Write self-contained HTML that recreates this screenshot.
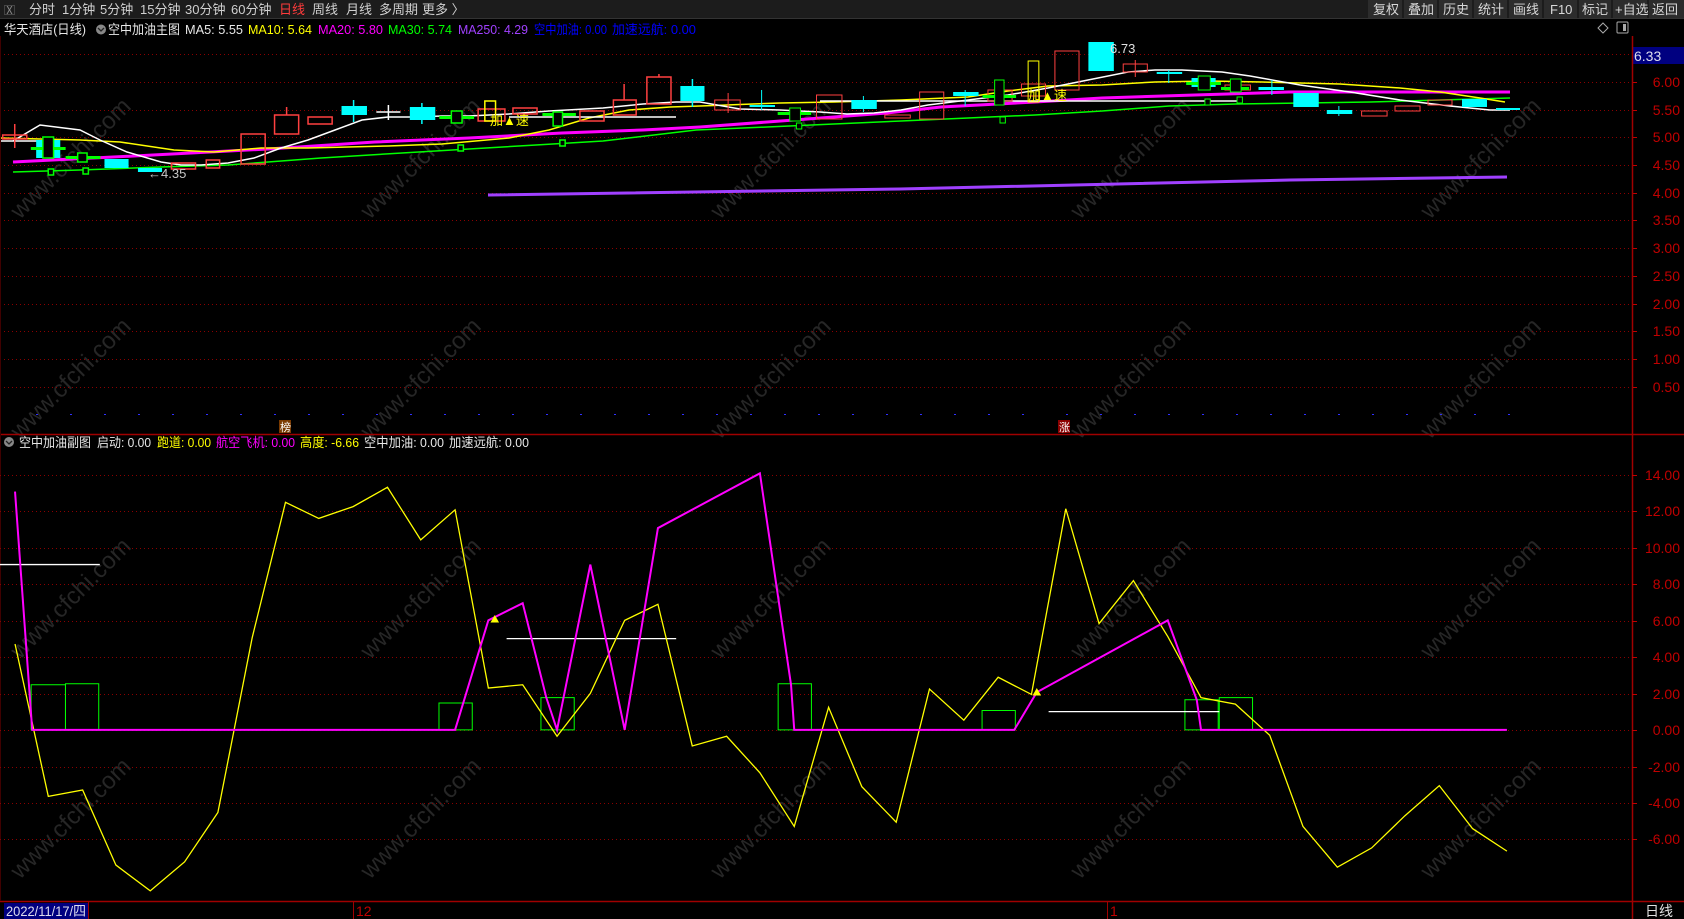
<!DOCTYPE html>
<html><head><meta charset="utf-8">
<style>
html,body{margin:0;padding:0;background:#000;}
body{width:1684px;height:919px;overflow:hidden;position:relative;font-family:"Liberation Sans","Noto Sans CJK SC",sans-serif;}
svg{position:absolute;left:0;top:0;}
</style></head><body>
<svg width="1684" height="919" viewBox="0 0 1684 919" xmlns="http://www.w3.org/2000/svg" font-family="Liberation Sans, Noto Sans CJK SC, sans-serif">
<rect width="1684" height="919" fill="#000"/>
<!-- watermarks -->
<g fill="#262626" font-size="24" font-family="Liberation Sans, sans-serif">
<text transform="translate(20,220) rotate(-45)">www.cfchi.com</text>
<text transform="translate(370,220) rotate(-45)">www.cfchi.com</text>
<text transform="translate(720,220) rotate(-45)">www.cfchi.com</text>
<text transform="translate(1080,220) rotate(-45)">www.cfchi.com</text>
<text transform="translate(1430,220) rotate(-45)">www.cfchi.com</text>
<text transform="translate(20,440) rotate(-45)">www.cfchi.com</text>
<text transform="translate(370,440) rotate(-45)">www.cfchi.com</text>
<text transform="translate(720,440) rotate(-45)">www.cfchi.com</text>
<text transform="translate(1080,440) rotate(-45)">www.cfchi.com</text>
<text transform="translate(1430,440) rotate(-45)">www.cfchi.com</text>
<text transform="translate(20,660) rotate(-45)">www.cfchi.com</text>
<text transform="translate(370,660) rotate(-45)">www.cfchi.com</text>
<text transform="translate(720,660) rotate(-45)">www.cfchi.com</text>
<text transform="translate(1080,660) rotate(-45)">www.cfchi.com</text>
<text transform="translate(1430,660) rotate(-45)">www.cfchi.com</text>
<text transform="translate(20,880) rotate(-45)">www.cfchi.com</text>
<text transform="translate(370,880) rotate(-45)">www.cfchi.com</text>
<text transform="translate(720,880) rotate(-45)">www.cfchi.com</text>
<text transform="translate(1080,880) rotate(-45)">www.cfchi.com</text>
<text transform="translate(1430,880) rotate(-45)">www.cfchi.com</text>
</g>

<!-- toolbar -->
<rect x="0" y="0" width="1684" height="18" fill="#1c1c1c"/>
<line x1="0" y1="18.5" x2="1684" y2="18.5" stroke="#333"/>
<g font-size="13" fill="#d0d0d0">
<text x="4" y="14" fill="#888" font-size="11">Ⅹ⃞</text>
<text x="29" y="14">分时</text><text x="62" y="14">1分钟</text><text x="100" y="14">5分钟</text>
<text x="140" y="14">15分钟</text><text x="185" y="14">30分钟</text><text x="231" y="14">60分钟</text>
<text x="279" y="14" fill="#ff3b3b">日线</text><text x="312" y="14">周线</text><text x="346" y="14">月线</text>
<text x="379" y="14">多周期</text><text x="422" y="14">更多 〉</text>
</g>
<g fill="#2c2c2c">
<rect x="1368" y="0" width="34" height="18"/><rect x="1404" y="0" width="33" height="18"/><rect x="1439" y="0" width="33" height="18"/>
<rect x="1474" y="0" width="33" height="18"/><rect x="1509" y="0" width="33" height="18"/><rect x="1544" y="0" width="33" height="18"/>
<rect x="1579" y="0" width="32" height="18"/><rect x="1613" y="0" width="34" height="18"/><rect x="1649" y="0" width="35" height="18"/>
</g>
<g font-size="13" fill="#d8d8d8">
<text x="1373" y="14">复权</text><text x="1408" y="14">叠加</text><text x="1443" y="14">历史</text><text x="1478" y="14">统计</text>
<text x="1513" y="14">画线</text><text x="1550" y="14">F10</text><text x="1582" y="14">标记</text><text x="1615" y="14">+自选</text><text x="1652" y="14">返回</text>
</g>

<!-- title row -->
<g font-size="13" lengthAdjust="spacingAndGlyphs">
<text x="4" y="34" fill="#e8e8e8" textLength="82" lengthAdjust="spacingAndGlyphs">华天酒店(日线)</text>
<circle cx="101" cy="29.5" r="5" fill="#888"/><path d="M98,28 L101,31 L104,28" stroke="#222" fill="none" stroke-width="1.3"/>
<text x="108" y="34" fill="#e8e8e8" textLength="72" lengthAdjust="spacingAndGlyphs">空中加油主图</text>
<text x="185" y="34" fill="#e8e8e8" textLength="58" lengthAdjust="spacingAndGlyphs">MA5: 5.55</text>
<text x="248" y="34" fill="#ffff00" textLength="64" lengthAdjust="spacingAndGlyphs">MA10: 5.64</text>
<text x="318" y="34" fill="#ff00ff" textLength="65" lengthAdjust="spacingAndGlyphs">MA20: 5.80</text>
<text x="388" y="34" fill="#00ff00" textLength="64" lengthAdjust="spacingAndGlyphs">MA30: 5.74</text>
<text x="458" y="34" fill="#a040ff" textLength="70" lengthAdjust="spacingAndGlyphs">MA250: 4.29</text>
<text x="534" y="34" fill="#0000ff" textLength="73" lengthAdjust="spacingAndGlyphs">空中加油: 0.00</text>
<text x="612" y="34" fill="#0000ff" textLength="84" lengthAdjust="spacingAndGlyphs">加速远航: 0.00</text>
</g>
<path d="M1603,23 L1608,28 L1603,33 L1598,28 Z" fill="none" stroke="#aaa"/>
<rect x="1617" y="22" width="11" height="11" fill="none" stroke="#aaa" rx="1"/><rect x="1623" y="24" width="3" height="7" fill="#aaa"/>

<!-- main grid -->
<g stroke="#8b0000" stroke-dasharray="1,3">
<line x1="0" y1="54.5" x2="1630" y2="54.5"/><line x1="0" y1="82.5" x2="1630" y2="82.5"/><line x1="0" y1="110.5" x2="1630" y2="110.5"/>
<line x1="0" y1="137.5" x2="1630" y2="137.5"/><line x1="0" y1="165.5" x2="1630" y2="165.5"/><line x1="0" y1="193.5" x2="1630" y2="193.5"/>
<line x1="0" y1="220.5" x2="1630" y2="220.5"/><line x1="0" y1="248.5" x2="1630" y2="248.5"/><line x1="0" y1="276.5" x2="1630" y2="276.5"/>
<line x1="0" y1="304.5" x2="1630" y2="304.5"/><line x1="0" y1="331.5" x2="1630" y2="331.5"/><line x1="0" y1="359.5" x2="1630" y2="359.5"/>
<line x1="0" y1="387.5" x2="1630" y2="387.5"/>
</g>
<!-- main axis labels -->
<g font-size="14" fill="#c00000" text-anchor="end">
<text x="1680" y="87">6.00</text><text x="1680" y="115">5.50</text><text x="1680" y="142">5.00</text><text x="1680" y="170">4.50</text>
<text x="1680" y="198">4.00</text><text x="1680" y="225">3.50</text><text x="1680" y="253">3.00</text><text x="1680" y="281">2.50</text>
<text x="1680" y="309">2.00</text><text x="1680" y="336">1.50</text><text x="1680" y="364">1.00</text><text x="1680" y="392">0.50</text>
</g>
<g stroke="#c00000"><line x1="1632" y1="82.5" x2="1637" y2="82.5"/><line x1="1632" y1="110.5" x2="1637" y2="110.5"/><line x1="1632" y1="137.5" x2="1637" y2="137.5"/><line x1="1632" y1="165.5" x2="1637" y2="165.5"/><line x1="1632" y1="193.5" x2="1637" y2="193.5"/><line x1="1632" y1="220.5" x2="1637" y2="220.5"/><line x1="1632" y1="248.5" x2="1637" y2="248.5"/><line x1="1632" y1="276.5" x2="1637" y2="276.5"/><line x1="1632" y1="304.5" x2="1637" y2="304.5"/><line x1="1632" y1="331.5" x2="1637" y2="331.5"/><line x1="1632" y1="359.5" x2="1637" y2="359.5"/><line x1="1632" y1="387.5" x2="1637" y2="387.5"/></g>
<rect x="1632" y="47" width="52" height="17" fill="#000080"/>
<text x="1634" y="61" font-size="14" fill="#dde">6.33</text>

<!-- MA lines -->
<polyline fill="none" stroke="#a040ff" stroke-width="3" points="488,195 900,189 1290,180 1507,177"/>
<polyline fill="none" stroke="#00ff00" stroke-width="1.5" points="13,172 80,170 161,167 228,165 268,162 321,158 402,153 469,149 536,145 603,141 696,130 767,127 834,124 901,121 968,118 1035,115 1102,111 1169,106 1236,104 1303,103 1370,102 1510,98"/>
<polyline fill="none" stroke="#ff00ff" stroke-width="3" points="13,162 134,156 268,149 375,142 469,138 562,133 643,130 700,127 794,120 887,113 941,107 1035,102 1102,98 1195,95 1289,92 1510,92"/>
<polyline fill="none" stroke="#ffff00" stroke-width="1.5" points="0,138 80,140 120,142 174,150 214,152 261,148 308,148 348,147 388,146 442,144 509,138 549,130 589,118 629,110 670,107 700,106 780,103 834,102 901,100 968,97 1008,91 1048,86 1102,85 1155,82 1209,81 1262,82 1340,84 1400,88 1440,92 1480,98 1505,102"/>
<polyline fill="none" stroke="#ffffff" stroke-width="1.5" points="13,141 40,125 80,130 100,140 127,152 161,162 181,165 201,165 228,163 254,158 281,148 308,140 335,130 362,120 388,117 415,117 442,116 469,116 509,114 549,111 603,108 643,104 676,102 700,102 740,109 780,110 820,112 847,114 874,113 901,110 928,105 968,100 1008,95 1048,88 1088,80 1128,72 1155,70 1182,70 1222,72 1250,76 1300,85 1350,92 1400,100 1450,106 1490,110 1510,110"/>
<line x1="509" y1="117" x2="676" y2="117" stroke="#fff" stroke-width="1.5"/>
<line x1="820" y1="101" x2="1240" y2="101" stroke="#fff" stroke-width="1.5"/>
<line x1="0" y1="141" x2="40" y2="141" stroke="#fff" stroke-width="1.5"/>

<!-- candles zoom6 frame -->
<g transform="scale(1.3393,1)" stroke-width="1.5">
<g fill="none" stroke="#ff4040">
<line x1="11" y1="124" x2="11" y2="148" vector-effect="non-scaling-stroke"/>
<rect x="2" y="135" width="18" height="4" vector-effect="non-scaling-stroke"/>
<rect x="128" y="163" width="18" height="6" vector-effect="non-scaling-stroke"/>
<rect x="154" y="160" width="10" height="8" vector-effect="non-scaling-stroke"/>
<rect x="180" y="134" width="18" height="30" vector-effect="non-scaling-stroke"/>
<line x1="214" y1="107" x2="214" y2="115" vector-effect="non-scaling-stroke"/>
<rect x="205" y="115" width="18" height="19" vector-effect="non-scaling-stroke"/>
<rect x="230" y="117" width="18" height="7" vector-effect="non-scaling-stroke"/>
<rect x="357" y="109" width="20" height="12" vector-effect="non-scaling-stroke"/>
<rect x="383" y="108" width="18" height="6" vector-effect="non-scaling-stroke"/>
<rect x="433" y="111" width="18" height="10" vector-effect="non-scaling-stroke"/>
<line x1="466" y1="84" x2="466" y2="100" vector-effect="non-scaling-stroke"/>
<rect x="458" y="100" width="17" height="15" vector-effect="non-scaling-stroke"/>
<line x1="492" y1="74" x2="492" y2="77" vector-effect="non-scaling-stroke"/>
<rect x="483" y="77" width="18" height="27" vector-effect="non-scaling-stroke"/>
</g>
<g fill="#00ffff">
<rect x="27" y="140" width="18" height="18"/>
<rect x="78" y="159" width="18" height="9"/>
<rect x="103" y="168" width="18" height="4"/>
<rect x="255" y="106" width="19" height="9"/>
<rect x="306" y="107" width="19" height="13"/>
<rect x="508" y="86" width="18" height="15"/>
</g>
<g stroke="#00ffff"><line x1="264" y1="100" x2="264" y2="122" vector-effect="non-scaling-stroke"/><line x1="315" y1="103" x2="315" y2="124" vector-effect="non-scaling-stroke"/><line x1="517" y1="79" x2="517" y2="107" vector-effect="non-scaling-stroke"/></g>
<g stroke="#fff"><line x1="281" y1="112" x2="299" y2="112" vector-effect="non-scaling-stroke"/><line x1="290" y1="105" x2="290" y2="120" vector-effect="non-scaling-stroke"/></g>
<g fill="#00ff00">
<rect x="23" y="147" width="26" height="3"/><rect x="49" y="156" width="26" height="3"/><rect x="328" y="116" width="26" height="3"/><rect x="405" y="113" width="25" height="3"/>
</g>
<g fill="#000" stroke="#00ff00">
<rect x="32" y="137" width="8" height="21" vector-effect="non-scaling-stroke"/>
<rect x="58" y="153" width="7" height="9" vector-effect="non-scaling-stroke"/>
<rect x="337" y="111" width="8" height="12" vector-effect="non-scaling-stroke"/>
<rect x="413" y="112" width="7" height="14" vector-effect="non-scaling-stroke"/>
<rect x="36" y="169" width="4" height="6" vector-effect="non-scaling-stroke"/>
<rect x="62" y="168" width="4" height="6" vector-effect="non-scaling-stroke"/>
<rect x="342" y="145" width="4" height="6" vector-effect="non-scaling-stroke"/>
<rect x="418" y="140" width="4" height="6" vector-effect="non-scaling-stroke"/>
</g>
<rect x="362" y="101" width="8" height="20" fill="none" stroke="#ffff00" vector-effect="non-scaling-stroke"/>
</g>
<text x="148" y="178" font-size="13" fill="#c8c8c8">←4.35</text>
<text x="490" y="125" font-size="13" fill="#ffff00">加▲速</text>

<!-- candles zoom7 frame -->
<g transform="translate(700,0) scale(1.3393,1) translate(-700,0)">
<g fill="none" stroke="#ff4040">
<rect x="711" y="100" width="19" height="10" vector-effect="non-scaling-stroke"/>
<rect x="787" y="95" width="19" height="24" vector-effect="non-scaling-stroke"/>
<rect x="838" y="115" width="19" height="3" vector-effect="non-scaling-stroke"/>
<rect x="864" y="92" width="18" height="27" vector-effect="non-scaling-stroke"/>
<rect x="915" y="90" width="18" height="11" vector-effect="non-scaling-stroke"/>
<rect x="940" y="84" width="18" height="12" vector-effect="non-scaling-stroke"/>
<rect x="965" y="51" width="18" height="39" vector-effect="non-scaling-stroke"/>
<rect x="1016" y="64" width="18" height="8" vector-effect="non-scaling-stroke"/>
<rect x="1092" y="85" width="19" height="5" vector-effect="non-scaling-stroke"/>
<rect x="1194" y="111" width="19" height="5" vector-effect="non-scaling-stroke"/>
<line x1="721" y1="93" x2="721" y2="113" vector-effect="non-scaling-stroke"/>
<line x1="1025" y1="60" x2="1025" y2="77" vector-effect="non-scaling-stroke"/>
</g>
<g fill="#00ffff">
<rect x="737" y="105" width="19" height="2"/>
<rect x="813" y="100" width="19" height="9"/>
<rect x="889" y="92" width="19" height="4"/>
<rect x="990" y="42" width="19" height="29"/>
<rect x="1041" y="72" width="19" height="2"/>
<rect x="1067" y="78" width="18" height="9"/>
<rect x="1117" y="87" width="19" height="3"/>
<rect x="1143" y="93" width="19" height="14"/>
<rect x="1168" y="110" width="19" height="4"/>
</g>
<g stroke="#00ffff"><line x1="746" y1="90" x2="746" y2="110" vector-effect="non-scaling-stroke"/><line x1="822" y1="96" x2="822" y2="112" vector-effect="non-scaling-stroke"/><line x1="898" y1="90" x2="898" y2="106" vector-effect="non-scaling-stroke"/><line x1="1050" y1="70" x2="1050" y2="83" vector-effect="non-scaling-stroke"/><line x1="1127" y1="80" x2="1127" y2="95" vector-effect="non-scaling-stroke"/><line x1="1177" y1="106" x2="1177" y2="116" vector-effect="non-scaling-stroke"/></g>
<g fill="#00ff00"><rect x="758" y="112" width="25" height="3"/><rect x="911" y="95" width="25" height="3"/><rect x="1063" y="82" width="26" height="3"/><rect x="1089" y="87" width="21" height="3"/></g>
<g fill="#000" stroke="#00ff00">
<rect x="767" y="108" width="8" height="13" vector-effect="non-scaling-stroke"/>
<rect x="920" y="80" width="7" height="25" vector-effect="non-scaling-stroke"/>
<rect x="1072" y="76" width="9" height="14" vector-effect="non-scaling-stroke"/>
<rect x="1096" y="79" width="8" height="13" vector-effect="non-scaling-stroke"/>
<rect x="772" y="123" width="4" height="6" vector-effect="non-scaling-stroke"/>
<rect x="924" y="117" width="4" height="6" vector-effect="non-scaling-stroke"/>
<rect x="1077" y="99" width="4" height="6" vector-effect="non-scaling-stroke"/>
<rect x="1101" y="97" width="4" height="6" vector-effect="non-scaling-stroke"/>
</g>
<rect x="945" y="61" width="8" height="41" fill="none" stroke="#ffff00" vector-effect="non-scaling-stroke"/>
</g>
<text x="1028" y="100" font-size="13" fill="#ffff00">加▲速</text>
<text x="1110" y="53" font-size="13" fill="#e0e0e0">6.73</text>
<!-- right candles true coords -->
<g fill="none" stroke="#ff4040"><rect x="1395" y="106" width="25" height="5"/><rect x="1428" y="100" width="24" height="5"/></g>
<rect x="1462" y="99" width="25" height="8" fill="#00ffff"/><rect x="1496" y="108" width="24" height="2" fill="#00ffff"/>

<!-- bottom markers -->
<g fill="#3030ff">
<rect x="36" y="414" width="2" height="1"/><rect x="70" y="414" width="2" height="1"/><rect x="104" y="414" width="2" height="1"/><rect x="138" y="414" width="2" height="1"/><rect x="172" y="414" width="2" height="1"/><rect x="206" y="414" width="2" height="1"/><rect x="240" y="414" width="2" height="1"/><rect x="274" y="414" width="2" height="1"/><rect x="308" y="414" width="2" height="1"/><rect x="342" y="414" width="2" height="1"/><rect x="376" y="414" width="2" height="1"/><rect x="410" y="414" width="2" height="1"/><rect x="444" y="414" width="2" height="1"/><rect x="478" y="414" width="2" height="1"/><rect x="512" y="414" width="2" height="1"/><rect x="546" y="414" width="2" height="1"/><rect x="580" y="414" width="2" height="1"/><rect x="614" y="414" width="2" height="1"/><rect x="648" y="414" width="2" height="1"/><rect x="682" y="414" width="2" height="1"/><rect x="716" y="414" width="2" height="1"/><rect x="750" y="414" width="2" height="1"/><rect x="784" y="414" width="2" height="1"/><rect x="818" y="414" width="2" height="1"/><rect x="852" y="414" width="2" height="1"/><rect x="886" y="414" width="2" height="1"/><rect x="920" y="414" width="2" height="1"/><rect x="954" y="414" width="2" height="1"/><rect x="988" y="414" width="2" height="1"/><rect x="1022" y="414" width="2" height="1"/><rect x="1066" y="414" width="2" height="1"/><rect x="1100" y="414" width="2" height="1"/><rect x="1134" y="414" width="2" height="1"/><rect x="1168" y="414" width="2" height="1"/><rect x="1202" y="414" width="2" height="1"/><rect x="1236" y="414" width="2" height="1"/><rect x="1270" y="414" width="2" height="1"/><rect x="1304" y="414" width="2" height="1"/><rect x="1338" y="414" width="2" height="1"/><rect x="1372" y="414" width="2" height="1"/><rect x="1406" y="414" width="2" height="1"/><rect x="1440" y="414" width="2" height="1"/><rect x="1474" y="414" width="2" height="1"/><rect x="1508" y="414" width="2" height="1"/>
</g>
<rect x="279" y="420" width="12" height="13" fill="#7a3a00"/><text x="280" y="431" font-size="11" fill="#fff">榜</text>
<rect x="1058" y="420" width="12" height="13" fill="#8b0000"/><text x="1059" y="431" font-size="11" fill="#fff">涨</text>

<!-- panel separators -->
<line x1="0" y1="434.5" x2="1684" y2="434.5" stroke="#a00000" stroke-width="1.5"/>
<line x1="1632.5" y1="36" x2="1632.5" y2="919" stroke="#a00000" stroke-width="1.5"/>
<line x1="0" y1="901.5" x2="1684" y2="901.5" stroke="#a00000" stroke-width="1.5"/>
<line x1="0.5" y1="36" x2="0.5" y2="901" stroke="#400000"/>

<!-- sub title -->
<g font-size="13">
<circle cx="9" cy="442" r="5" fill="#888"/><path d="M6,441 L9,444 L12,441" stroke="#222" fill="none" stroke-width="1.3"/>
<text x="19" y="447" fill="#e8e8e8" textLength="72" lengthAdjust="spacingAndGlyphs">空中加油副图</text>
<text x="97" y="447" fill="#e8e8e8" textLength="54" lengthAdjust="spacingAndGlyphs">启动: 0.00</text>
<text x="157" y="447" fill="#ffff00" textLength="54" lengthAdjust="spacingAndGlyphs">跑道: 0.00</text>
<text x="216" y="447" fill="#ff00ff" textLength="79" lengthAdjust="spacingAndGlyphs">航空飞机: 0.00</text>
<text x="300" y="447" fill="#ffff00" textLength="59" lengthAdjust="spacingAndGlyphs">高度: -6.66</text>
<text x="364" y="447" fill="#e8e8e8" textLength="80" lengthAdjust="spacingAndGlyphs">空中加油: 0.00</text>
<text x="449" y="447" fill="#e8e8e8" textLength="80" lengthAdjust="spacingAndGlyphs">加速远航: 0.00</text>
</g>

<!-- sub grid -->
<g stroke="#8b0000" stroke-dasharray="1,3">
<line x1="0" y1="475.5" x2="1630" y2="475.5"/><line x1="0" y1="511.5" x2="1630" y2="511.5"/><line x1="0" y1="548.5" x2="1630" y2="548.5"/>
<line x1="0" y1="584.5" x2="1630" y2="584.5"/><line x1="0" y1="621.5" x2="1630" y2="621.5"/><line x1="0" y1="657.5" x2="1630" y2="657.5"/>
<line x1="0" y1="694.5" x2="1630" y2="694.5"/><line x1="0" y1="730.5" x2="1630" y2="730.5"/><line x1="0" y1="767.5" x2="1630" y2="767.5"/>
<line x1="0" y1="803.5" x2="1630" y2="803.5"/><line x1="0" y1="839.5" x2="1630" y2="839.5"/>
</g>
<g font-size="14" fill="#c00000" text-anchor="end">
<text x="1680" y="480">14.00</text><text x="1680" y="516">12.00</text><text x="1680" y="553">10.00</text><text x="1680" y="589">8.00</text>
<text x="1680" y="626">6.00</text><text x="1680" y="662">4.00</text><text x="1680" y="699">2.00</text><text x="1680" y="735">0.00</text>
<text x="1680" y="772">-2.00</text><text x="1680" y="808">-4.00</text><text x="1680" y="844">-6.00</text>
</g>
<g stroke="#c00000"><line x1="1632" y1="475.5" x2="1637" y2="475.5"/><line x1="1632" y1="511.5" x2="1637" y2="511.5"/><line x1="1632" y1="548.5" x2="1637" y2="548.5"/><line x1="1632" y1="584.5" x2="1637" y2="584.5"/><line x1="1632" y1="621.5" x2="1637" y2="621.5"/><line x1="1632" y1="657.5" x2="1637" y2="657.5"/><line x1="1632" y1="694.5" x2="1637" y2="694.5"/><line x1="1632" y1="730.5" x2="1637" y2="730.5"/><line x1="1632" y1="767.5" x2="1637" y2="767.5"/><line x1="1632" y1="803.5" x2="1637" y2="803.5"/><line x1="1632" y1="839.5" x2="1637" y2="839.5"/></g>

<!-- sub chart -->
<g transform="scale(1.0733)">
<g fill="none" stroke="#00ff00" stroke-width="1">
<rect x="29" y="638" width="32" height="42" vector-effect="non-scaling-stroke"/>
<rect x="61" y="637" width="31" height="43" vector-effect="non-scaling-stroke"/>
<rect x="409" y="655" width="31" height="25" vector-effect="non-scaling-stroke"/>
<rect x="504" y="650" width="31" height="30" vector-effect="non-scaling-stroke"/>
<rect x="725" y="637" width="31" height="43" vector-effect="non-scaling-stroke"/>
<rect x="915" y="662" width="31" height="18" vector-effect="non-scaling-stroke"/>
<rect x="1104" y="652" width="31" height="28" vector-effect="non-scaling-stroke"/>
<rect x="1136" y="650" width="31" height="30" vector-effect="non-scaling-stroke"/>
</g>
<g stroke="#ffffff" stroke-width="1.3">
<line x1="0" y1="526" x2="93" y2="526" vector-effect="non-scaling-stroke"/>
<line x1="472" y1="595" x2="630" y2="595" vector-effect="non-scaling-stroke"/>
<line x1="977" y1="663" x2="1136" y2="663" vector-effect="non-scaling-stroke"/>
</g>
<polyline fill="none" stroke="#ffff00" stroke-width="1.3" vector-effect="non-scaling-stroke" points="14,600 45,742 77,736 108,806 140,830 172,803 203,757 235,594 266,468 297,483 329,472 361,454 392,503 424,475 455,641 487,638 519,686 550,646 582,578 613,563 645,695 677,686 708,720 740,770 772,659 803,733 835,766 866,642 898,671 930,631 961,647 993,474 1024,581 1056,541 1088,593 1119,650 1151,656 1183,685 1214,770 1246,808 1278,790 1309,760 1341,732 1372,772 1404,793"/>
<polyline fill="none" stroke="#ff00ff" stroke-width="2" vector-effect="non-scaling-stroke" points="14,458 30,680 424,680 455,578 487,562 509,650 519,680 550,526 582,680 613,492 708,441 737,638 740,680 945,680 966,645 1088,578 1115,652 1119,680 1404,680"/>
<path d="M461,573 L465,580 L457,580 Z" fill="#ffff00"/>
<path d="M966,641 L970,648 L962,648 Z" fill="#ffff00"/>
</g>

<!-- date bar -->
<rect x="4" y="903" width="84" height="16" fill="#000080"/>
<text x="6" y="916" font-size="14" fill="#dde" textLength="80" lengthAdjust="spacingAndGlyphs">2022/11/17/四</text>
<line x1="88.5" y1="902" x2="88.5" y2="919" stroke="#a00000"/>
<line x1="353.5" y1="902" x2="353.5" y2="919" stroke="#a00000"/>
<text x="356" y="916" font-size="14" fill="#c00000">12</text>
<line x1="1107.5" y1="902" x2="1107.5" y2="919" stroke="#a00000"/>
<text x="1110" y="916" font-size="14" fill="#c00000">1</text>
<text x="1645" y="916" font-size="14" fill="#e0e0e0">日线</text>
</svg>
</body></html>
